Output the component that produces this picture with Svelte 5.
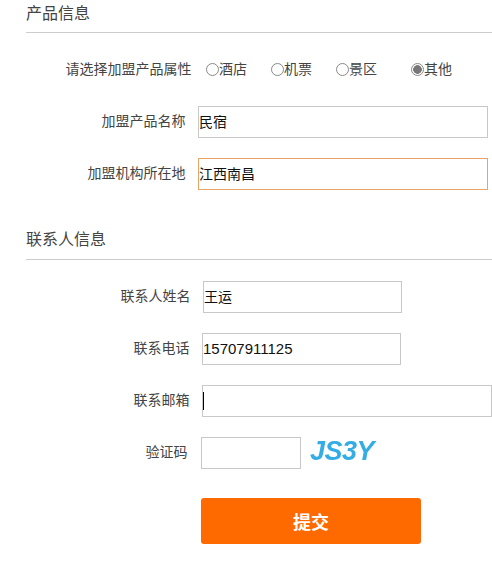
<script>
  let attrs = [
    { name: "酒店", wide: false, checked: false },
    { name: "机票", wide: false, checked: false },
    { name: "景区", wide: true, checked: false },
    { name: "其他", wide: false, checked: true },
  ];
</script>

<form class="page" on:submit|preventDefault>
  <h2 class="title">产品信息</h2>

  <div class="rows first">
    <div class="row">
      <label class="label l-192">请选择加盟产品属性</label>
      <div class="radios">
        {#each attrs as a}
          <label class="radio" class:wide={a.wide}>
            <input type="radio" name="attr" checked={a.checked} />{a.name}
          </label>
        {/each}
      </div>
    </div>
    <div class="row">
      <label class="label l-186">加盟产品名称</label>
      <input class="text w-290" value="民宿" />
    </div>
    <div class="row">
      <label class="label l-186">加盟机构所在地</label>
      <input class="text w-290 focus" value="江西南昌" />
    </div>
  </div>

  <h2 class="title second">联系人信息</h2>

  <div class="rows">
    <div class="row">
      <label class="label l-191">联系人姓名</label>
      <input class="text w-199" value="王运" />
    </div>
    <div class="row">
      <label class="label l-190">联系电话</label>
      <input class="text w-199 digits" value="15707911125" />
    </div>
    <div class="row">
      <label class="label l-190">联系邮箱</label>
      <div class="caret-wrap">
        <input class="text w-290" />
        <span class="caret"></span>
      </div>
    </div>
    <div class="row">
      <label class="label l-189">验证码</label>
      <input class="text w-100" />
      <span class="captcha">JS3Y</span>
    </div>
  </div>

  <button class="submit" type="submit">提交</button>
</form>

<style>
  :global(body) {
    margin: 0;
    background: #fff;
  }

  .page {
    width: 492px;
    height: 573px;
    overflow: hidden;
    font-family: "Noto Sans CJK SC", "Liberation Sans", sans-serif;
    font-size: 14px;
    color: #444;
  }

  .title {
    margin: 0 0 0 26px;
    height: 32px;
    line-height: 24px;
    font-size: 16px;
    font-weight: 400;
    color: #444;
    border-bottom: 1px solid #ccc;
  }

  .title.second {
    margin-top: 35px;
    height: 34px;
    line-height: 26px;
  }

  .rows {
    display: flex;
    flex-direction: column;
    gap: 20px;
    margin-top: 21px;
  }

  .row {
    display: flex;
    align-items: center;
    height: 32px;
  }

  .label {
    text-align: right;
    flex: none;
    line-height: 20px;
    margin-top: -4px;
  }

  .l-192 { width: 191.5px; margin-right: 14.5px; }
  .l-186 { width: 185.5px; margin-right: 12.5px; }
  .l-191 { width: 190.5px; margin-right: 12.5px; }
  .l-190 { width: 189.5px; margin-right: 12.5px; }
  .l-189 { width: 187.5px; margin-right: 13.5px; }

  .radios {
    display: flex;
    align-items: center;
    margin-top: -4px;
  }

  .radio {
    display: flex;
    align-items: center;
    width: 65px;
    line-height: 20px;
  }

  .radio.wide {
    width: 75px;
  }

  .radio input {
    appearance: none;
    flex: none;
    box-sizing: border-box;
    width: 13px;
    height: 13px;
    margin: 2px 0 0;
    border: 1px solid #8a8a8a;
    border-radius: 50%;
    background: #fff;
  }

  .radio input:checked {
    background: radial-gradient(circle, #777 0 4px, #fff 4.6px);
  }

  .text {
    box-sizing: border-box;
    height: 32px;
    padding: 0 0 2px;
    border: 1px solid #c8c8c8;
    font: inherit;
    color: #111;
    outline: none;
    flex: none;
  }

  .text.focus {
    border-color: #e8a468;
  }

  .digits {
    font-family: "Liberation Sans", sans-serif;
    font-size: 15px;
  }

  .w-290 { width: 290px; }
  .w-199 { width: 199px; }
  .w-100 { width: 100px; }

  .caret-wrap {
    position: relative;
    height: 32px;
  }

  .caret {
    position: absolute;
    left: 1px;
    top: 7px;
    width: 1px;
    height: 18px;
    background: #000;
  }

  .captcha {
    margin-left: 9px;
    font-family: "Liberation Sans", sans-serif;
    font-size: 27px;
    font-weight: 700;
    font-style: italic;
    letter-spacing: -0.5px;
    color: #35ade4;
    filter: blur(0.5px);
    line-height: 30px;
    margin-top: -4px;
  }

  .submit {
    display: block;
    width: 220px;
    height: 46px;
    margin: 29px 0 0 201px;
    border: 0;
    border-radius: 3px;
    background: #ff6a00;
    color: #fff;
    font: inherit;
    font-size: 18px;
    font-weight: 700;
  }
</style>
